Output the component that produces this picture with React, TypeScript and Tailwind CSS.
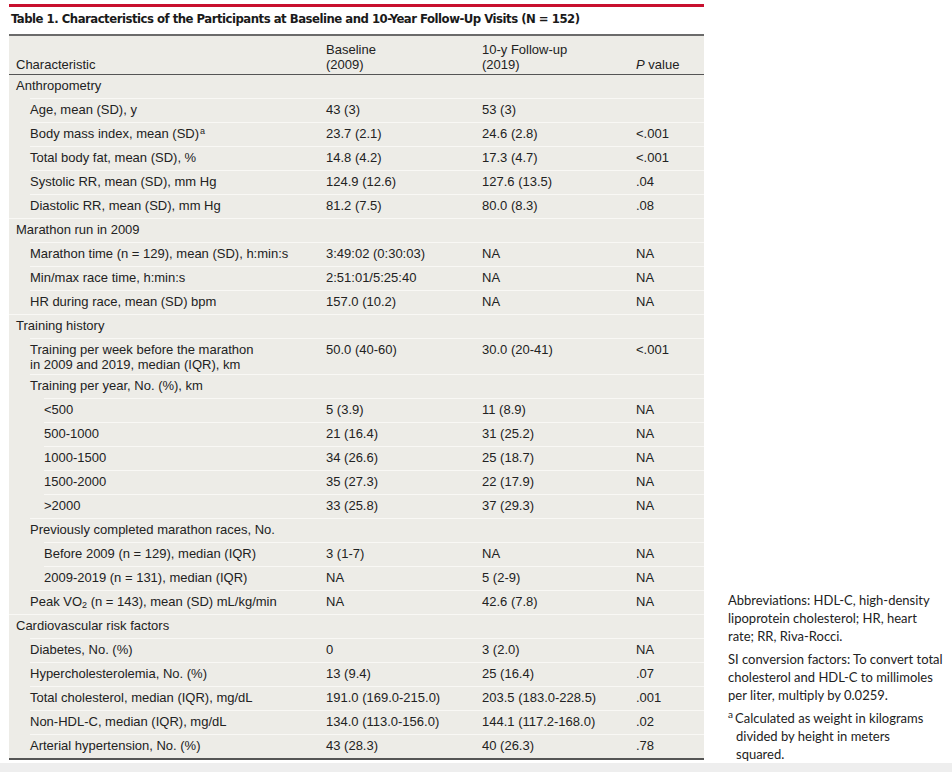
import type { ReactNode } from 'react'

type Row = {
  label: ReactNode
  level: 0 | 1 | 2
  base?: string
  follow?: string
  p?: string
}

const ROWS: Row[] = [
  { label: 'Anthropometry', level: 0 },
  { label: 'Age, mean (SD), y', level: 1, base: '43 (3)', follow: '53 (3)' },
  { label: <>Body mass index, mean (SD)<sup className="text-[9px] ml-[1px]">a</sup></>, level: 1, base: '23.7 (2.1)', follow: '24.6 (2.8)', p: '<.001' },
  { label: 'Total body fat, mean (SD), %', level: 1, base: '14.8 (4.2)', follow: '17.3 (4.7)', p: '<.001' },
  { label: 'Systolic RR, mean (SD), mm Hg', level: 1, base: '124.9 (12.6)', follow: '127.6 (13.5)', p: '.04' },
  { label: 'Diastolic RR, mean (SD), mm Hg', level: 1, base: '81.2 (7.5)', follow: '80.0 (8.3)', p: '.08' },
  { label: 'Marathon run in 2009', level: 0 },
  { label: 'Marathon time (n = 129), mean (SD), h:min:s', level: 1, base: '3:49:02 (0:30:03)', follow: 'NA', p: 'NA' },
  { label: 'Min/max race time, h:min:s', level: 1, base: '2:51:01/5:25:40', follow: 'NA', p: 'NA' },
  { label: 'HR during race, mean (SD) bpm', level: 1, base: '157.0 (10.2)', follow: 'NA', p: 'NA' },
  { label: 'Training history', level: 0 },
  { label: <>Training per week before the marathon<br />in 2009 and 2019, median (IQR), km</>, level: 1, base: '50.0 (40-60)', follow: '30.0 (20-41)', p: '<.001' },
  { label: 'Training per year, No. (%), km', level: 1 },
  { label: '<500', level: 2, base: '5 (3.9)', follow: '11 (8.9)', p: 'NA' },
  { label: '500-1000', level: 2, base: '21 (16.4)', follow: '31 (25.2)', p: 'NA' },
  { label: '1000-1500', level: 2, base: '34 (26.6)', follow: '25 (18.7)', p: 'NA' },
  { label: '1500-2000', level: 2, base: '35 (27.3)', follow: '22 (17.9)', p: 'NA' },
  { label: '>2000', level: 2, base: '33 (25.8)', follow: '37 (29.3)', p: 'NA' },
  { label: 'Previously completed marathon races, No.', level: 1 },
  { label: 'Before 2009 (n = 129), median (IQR)', level: 2, base: '3 (1-7)', follow: 'NA', p: 'NA' },
  { label: '2009-2019 (n = 131), median (IQR)', level: 2, base: 'NA', follow: '5 (2-9)', p: 'NA' },
  { label: <>Peak VO<sub className="text-[9px]">2</sub> (n = 143), mean (SD) mL/kg/min</>, level: 1, base: 'NA', follow: '42.6 (7.8)', p: 'NA' },
  { label: 'Cardiovascular risk factors', level: 0 },
  { label: 'Diabetes, No. (%)', level: 1, base: '0', follow: '3 (2.0)', p: 'NA' },
  { label: 'Hypercholesterolemia, No. (%)', level: 1, base: '13 (9.4)', follow: '25 (16.4)', p: '.07' },
  { label: 'Total cholesterol, median (IQR), mg/dL', level: 1, base: '191.0 (169.0-215.0)', follow: '203.5 (183.0-228.5)', p: '.001' },
  { label: 'Non-HDL-C, median (IQR), mg/dL', level: 1, base: '134.0 (113.0-156.0)', follow: '144.1 (117.2-168.0)', p: '.02' },
  { label: 'Arterial hypertension, No. (%)', level: 1, base: '43 (28.3)', follow: '40 (26.3)', p: '.78' },
]

const indent = ['pl-[7px]', 'pl-[21px]', 'pl-[35px]']
const sepIndent = ['ml-0', 'ml-[21px]', 'ml-[35px]']

function TableRow({ row, first }: { row: Row; first: boolean }) {
  return (
    <div>
      {!first && <div className={`h-px bg-[#f9f8f5] ${sepIndent[row.level]}`} />}
      <div className="grid grid-cols-[317px_156px_154px_68px] min-h-[23px] pt-[3px] pb-[2px] leading-[15px]">
        <div className={indent[row.level]}>{row.label}</div>
        <div>{row.base}</div>
        <div>{row.follow}</div>
        <div>{row.p}</div>
      </div>
    </div>
  )
}

export default function App() {
  return (
    <div className="w-[952px] h-[772px] bg-white text-[#222] overflow-hidden flex flex-col" style={{ fontFamily: '"Liberation Sans", Arial, sans-serif' }}>
      <div className="flex items-end pt-[5px] h-[763px]">
        <div className="ml-[9px] w-[695px] mb-[3px]">
          <div className="h-[3px] bg-[#c8102e]" />
          <h1 className="pl-[2px] pt-[3px] pb-[6px] leading-[18px] text-[13px] tracking-[-0.5px] font-bold text-[#1a1a1a]" style={{ fontFamily: '"DejaVu Sans Condensed", "Liberation Sans", sans-serif' }}>
            Table 1. Characteristics of the Participants at Baseline and 10-Year Follow-Up Visits (N = 152)
          </h1>
          <div className="bg-[#edece7] text-[13px] border-t-2 border-[#6b6b6b] border-b-2 border-b-[#555]">
            <div className="grid grid-cols-[317px_156px_154px_68px] items-end pt-[6px] pb-[2px] leading-[15px] border-b border-[#555]">
              <div className="pl-[7px]">Characteristic</div>
              <div>Baseline<br />(2009)</div>
              <div>10-y Follow-up<br />(2019)</div>
              <div><i>P</i> value</div>
            </div>
            {ROWS.map((r, i) => (
              <TableRow key={i} row={r} first={i === 0} />
            ))}
          </div>
        </div>
        <div className="ml-[24px] w-[224px] text-[13px] leading-[18px] text-[#222] flex flex-col gap-[5px]" style={{ fontFamily: 'Lato, "Open Sans", sans-serif' }}>
          <p>Abbreviations: HDL-C, high-density<br />lipoprotein cholesterol; HR, heart<br />rate; RR, Riva-Rocci.</p>
          <p>SI conversion factors: To convert total<br />cholesterol and HDL-C to millimoles<br />per liter, multiply by 0.0259.</p>
          <p className="pl-[8px] -indent-[8px]"><sup className="text-[10px] mr-[2px]">a</sup>Calculated as weight in kilograms<br />divided by height in meters<br />squared.</p>
        </div>
      </div>
      <div className="h-[9px] bg-[#eeeeee]" />
    </div>
  )
}
